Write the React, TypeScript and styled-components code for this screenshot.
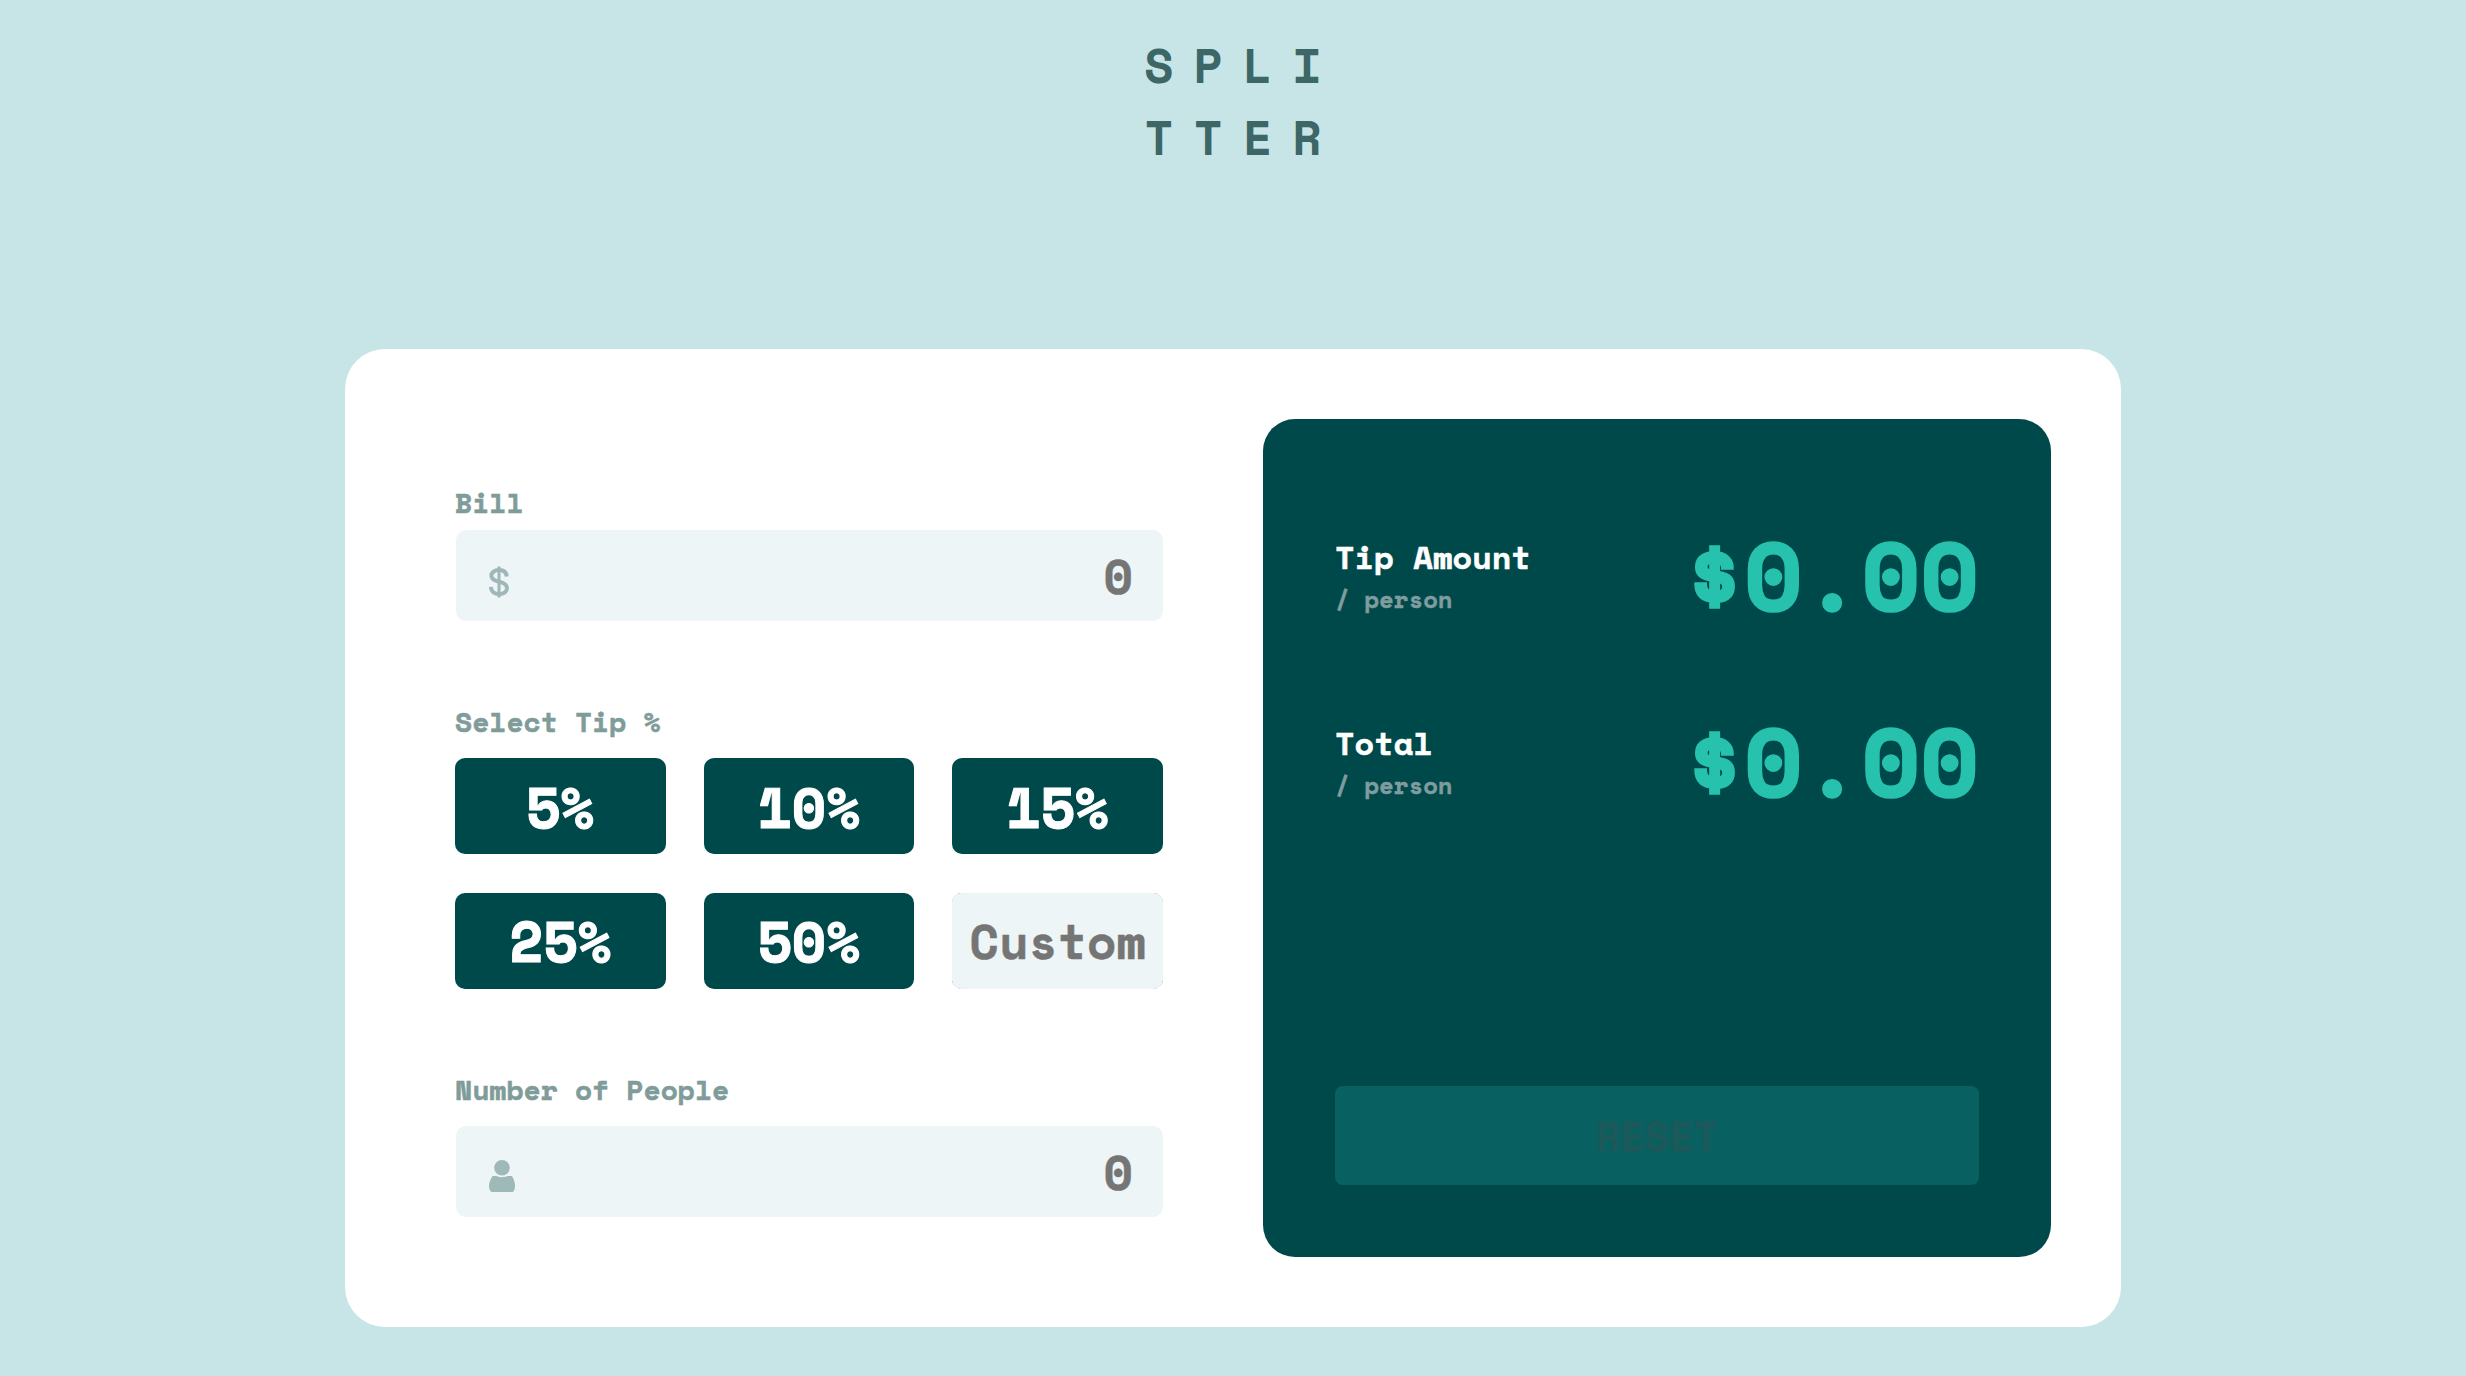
import React, { useState } from 'react';
import styled, { createGlobalStyle, css } from 'styled-components';

const mono = "'Space Mono', 'DejaVu Sans Mono', 'Liberation Mono', monospace";

const heavy = css`
  -webkit-text-stroke: 0.018em currentColor;
`;

const GlobalStyle = createGlobalStyle`
  *, *::before, *::after { box-sizing: border-box; }
  body {
    margin: 0;
    background: #c7e5e7;
    font-family: ${mono};
    font-weight: 700;
  }
  input, button { font: inherit; border: 0; }
`;

const Page = styled.div`
  display: flex;
  flex-direction: column;
  align-items: center;
  min-height: 1376px;
  background: #c7e5e7;
`;

const Logo = styled.h1`
  margin: 29px 0 0;
  padding-left: 20px;
  font-size: 48px;
  line-height: 72px;
  letter-spacing: 20px;
  color: #3d6666;
`;

const LogoLine = styled.span`
  display: block;
`;

const Card = styled.main`
  display: grid;
  grid-template-columns: 708px 788px;
  column-gap: 100px;
  width: 1776px;
  height: 978px;
  margin-top: 176px;
  padding: 70px 70px 70px 110px;
  border-radius: 40px;
  background: #fff;
`;

const Form = styled.form`
  display: flex;
  flex-direction: column;
  padding-top: 63px;
`;

const Group = styled.section<{ $gap: number; $after?: number }>`
  display: flex;
  flex-direction: column;
  gap: ${(p) => p.$gap}px;
  margin-bottom: ${(p) => p.$after ?? 0}px;
`;

const Label = styled.label`
  height: 41px;
  font-size: 28px;
  line-height: 41px;
  color: #7f9c9a;
  ${heavy}
`;

const Field = styled.div`
  display: flex;
  align-items: center;
  height: 91px;
  margin-left: 1px;
  padding: 0 30px 0 33px;
  border-radius: 10px;
  background: #edf5f6;
`;

const FieldInput = styled.input`
  flex: 1;
  min-width: 0;
  height: 100%;
  padding: 0;
  font-size: 48px;
  text-align: right;
  color: #00494d;
  background: transparent;
  outline: none;
  -webkit-text-stroke: 0.01em #757575;
  &::placeholder { color: #757575; opacity: 1; }
`;

const TipGrid = styled.div`
  display: grid;
  grid-template-columns: repeat(3, 1fr);
  grid-auto-rows: 96px;
  gap: 39px 38px;
`;

const TipButton = styled.button`
  padding: 0;
  border-radius: 10px;
  font-size: 56px;
  line-height: 83px;
  color: #fff;
  background: #00494b;
  ${heavy}

  &:nth-child(n + 4) {
    padding-bottom: 2px;
  }
`;

const CustomCell = styled.div`
  display: flex;
  border-radius: 10px;
  background: #00494b;
`;

const CustomInput = styled.input`
  width: 100%;
  padding: 0 0 2px;
  border-radius: 9px;
  font-size: 48px;
  text-align: center;
  color: #00494d;
  background: #edf5f6;
  outline: none;
  -webkit-text-stroke: 0.01em #757575;
  &::placeholder { color: #757575; opacity: 1; }
`;

const Panel = styled.section`
  display: flex;
  flex-direction: column;
  padding: 85px 72px 72px;
  border-radius: 32px;
  background: #00494b;
`;

const Result = styled.div`
  display: flex;
  justify-content: space-between;
  height: 142px;
  margin-bottom: 44px;
`;

const ResultLabel = styled.div`
  padding-top: 30px;
`;

const ResultName = styled.div`
  font-size: 32px;
  line-height: 47.5px;
  color: #fff;
  ${heavy}
`;

const ResultUnit = styled.div`
  font-size: 24px;
  line-height: 35.5px;
  color: #7f9c9f;
  ${heavy}
`;

const Amount = styled.div`
  font-size: 96px;
  line-height: 142px;
  color: #26c2ae;
  ${heavy}
`;

const ResetButton = styled.button`
  height: 99px;
  margin-top: auto;
  padding: 0;
  border-radius: 8px;
  font-size: 40px;
  color: #1d585a;
  background: #086160;
  ${heavy}
`;

const FieldIcon = styled.svg<{ $drop: number }>`
  flex: none;
  margin-top: ${(p) => p.$drop}px;
`;

const DollarIcon = () => (
  <FieldIcon $drop={12} width="20" height="32" viewBox="0 0 20 32" fill="none" stroke="#9fb7b9">
    <path d="M10 0.5V31.5" strokeWidth="3" />
    <path
      d="M17.7 10.5C17.4 6.2 14.4 4 10 4C5.4 4 2.4 6.4 2.4 9.8C2.4 13.3 5 14.6 10 15.7C15.4 16.9 18 18.4 18 22C18 25.7 15 28 10.2 28C5.2 28 2 25.4 1.8 20.8"
      strokeWidth="4"
    />
  </FieldIcon>
);

const PersonIcon = () => (
  <FieldIcon $drop={9} width="26" height="32" viewBox="0 0 26 32" fill="#9fb9b8">
    <circle cx="13" cy="7.8" r="7.8" />
    <path d="M3.6 16H7.5C10.5 17.6 15.5 17.6 18.5 16H23C24.8 19.2 26 22.3 26 26C26 28.6 25.3 30.5 24 32H2.4C0.8 30.5 0 28.6 0 26C0 22.3 1.8 18.8 3.6 16Z" />
  </FieldIcon>
);

const tips = [5, 10, 15, 25, 50];

export default function App() {
  const [bill, setBill] = useState('');
  const [people, setPeople] = useState('');
  const [custom, setCustom] = useState('');
  const [tip, setTip] = useState(0);

  const count = Number(people);
  const rate = (Number(custom) || tip) / 100;
  const tipEach = count > 0 ? (Number(bill) * rate) / count : 0;
  const totalEach = count > 0 ? Number(bill) / count + tipEach : 0;

  const reset = () => {
    setBill('');
    setPeople('');
    setCustom('');
    setTip(0);
  };

  const results = [
    { name: 'Tip Amount', value: tipEach },
    { name: 'Total', value: totalEach },
  ];

  return (
    <Page>
      <GlobalStyle />
      <Logo>
        <LogoLine>SPLI</LogoLine>
        <LogoLine>TTER</LogoLine>
      </Logo>
      <Card>
        <Form onSubmit={(e) => e.preventDefault()}>
          <Group $gap={7} $after={80}>
            <Label htmlFor="bill">Bill</Label>
            <Field>
              <DollarIcon />
              <FieldInput id="bill" placeholder="0" value={bill} onChange={(e) => setBill(e.target.value)} />
            </Field>
          </Group>
          <Group $gap={16} $after={80}>
            <Label as="div">Select Tip %</Label>
            <TipGrid>
              {tips.map((t) => (
                <TipButton key={t} type="button" onClick={() => setTip(t)}>
                  {t}%
                </TipButton>
              ))}
              <CustomCell>
                <CustomInput placeholder="Custom" value={custom} onChange={(e) => setCustom(e.target.value)} />
              </CustomCell>
            </TipGrid>
          </Group>
          <Group $gap={16}>
            <Label htmlFor="people">Number of People</Label>
            <Field>
              <PersonIcon />
              <FieldInput id="people" placeholder="0" value={people} onChange={(e) => setPeople(e.target.value)} />
            </Field>
          </Group>
        </Form>
        <Panel>
          {results.map((r) => (
            <Result key={r.name}>
              <ResultLabel>
                <ResultName>{r.name}</ResultName>
                <ResultUnit>/ person</ResultUnit>
              </ResultLabel>
              <Amount>${r.value.toFixed(2)}</Amount>
            </Result>
          ))}
          <ResetButton type="button" onClick={reset}>
            RESET
          </ResetButton>
        </Panel>
      </Card>
    </Page>
  );
}
